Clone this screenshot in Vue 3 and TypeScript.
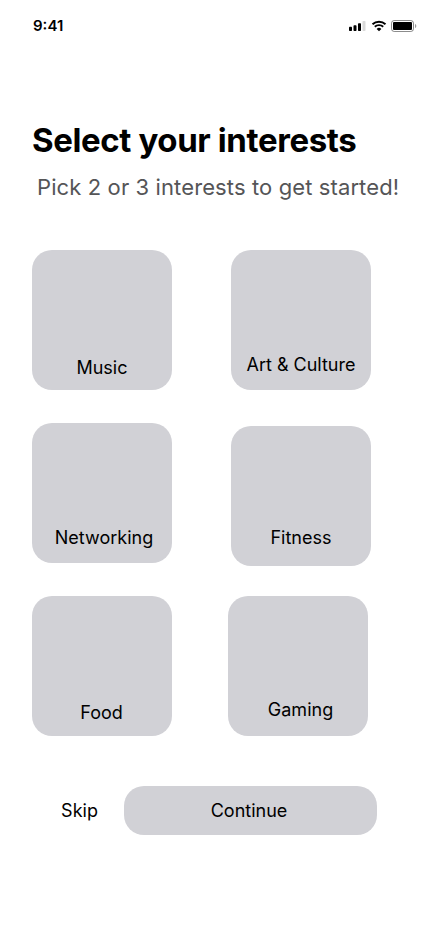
<script setup lang="ts">
interface Interest {
  id: string
  label: string
}

const interests: Interest[] = [
  { id: 'music', label: 'Music' },
  { id: 'art', label: 'Art & Culture' },
  { id: 'networking', label: 'Networking' },
  { id: 'fitness', label: 'Fitness' },
  { id: 'food', label: 'Food' },
  { id: 'gaming', label: 'Gaming' },
]
</script>

<template>
  <main class="screen">
    <header class="status">
      <span class="time">9:41</span>
      <svg class="signal" width="17" height="12" viewBox="0 0 17 12">
        <rect x="0" y="6.7" width="3" height="4.2" rx="0.7" />
        <rect x="4.5" y="5.2" width="3" height="5.7" rx="0.7" />
        <rect x="9" y="3.2" width="3" height="7.7" rx="0.7" />
        <rect x="13.5" y="1" width="3" height="9.9" rx="0.7" opacity="0.15" />
      </svg>
      <svg class="wifi" width="16" height="12" viewBox="0 0 16 12">
        <path d="M1.5 4.3a9.4 9.4 0 0 1 13 0M3.8 6.8a6 6 0 0 1 8.4 0" fill="none" stroke="#000" stroke-width="1.9" />
        <path d="M5.6 8.9a3.5 3.5 0 0 1 4.8 0L8 11.2z" />
      </svg>
      <svg class="battery" width="26" height="12" viewBox="0 0 26 12">
        <rect x="0.5" y="0.5" width="22" height="11" rx="2.7" fill="none" stroke="#000" stroke-opacity="0.45" />
        <rect x="2" y="2" width="19" height="8" rx="1.1" />
        <path d="M24 4v4c.8-.3 1.3-1.1 1.3-2s-.5-1.7-1.3-2z" opacity="0.4" />
      </svg>
    </header>
    <h1>Select your interests</h1>
    <p class="subtitle">Pick 2 or 3 interests to get started!</p>
    <section class="grid">
      <button v-for="item in interests" :key="item.id" type="button" class="card" :class="item.id">
        <span>{{ item.label }}</span>
      </button>
    </section>
    <footer class="actions">
      <button type="button" class="skip">Skip</button>
      <button type="button" class="continue">Continue</button>
    </footer>
  </main>
</template>

<style>
body {
  background: #fff;
}
</style>

<style scoped>
.screen {
  width: 430px;
  height: 932px;
  box-sizing: border-box;
  overflow: hidden;
  background: #fff;
  color: #000;
  font-family: Inter, sans-serif;
}
button {
  border: 0;
  margin: 0;
  padding: 0;
  font: 400 18px/22px Inter, sans-serif;
  color: #000;
  background: none;
}
.status {
  display: flex;
  align-items: center;
  height: 52px;
  padding: 0 13px 0 33px;
}
.time {
  font-size: 15px;
  line-height: 18px;
  font-weight: 600;
  margin-right: auto;
}
.wifi {
  margin: 0 4px 0 5px;
}
h1 {
  margin: 68px 0 0 32px;
  font-size: 33px;
  line-height: 40px;
  font-weight: 700;
  letter-spacing: -0.39px;
  white-space: nowrap;
}
.subtitle {
  margin: 14px 0 0 37px;
  font-size: 22px;
  line-height: 27px;
  font-weight: 400;
  letter-spacing: 0.11px;
  color: #555557;
  white-space: nowrap;
}
.grid {
  display: grid;
  grid-template-columns: 140px 140px;
  column-gap: 59px;
  row-gap: 33px;
  margin: 49px 0 0 32px;
}
.card {
  display: flex;
  align-items: flex-end;
  justify-content: center;
  height: 140px;
  padding-bottom: 11px;
  border-radius: 20px;
  background: #d1d1d6;
}
.art {
  padding-bottom: 14px;
}
.networking {
  padding: 0 0 14px 4px;
}
.fitness {
  margin-top: 3px;
  margin-bottom: -3px;
  padding-bottom: 17px;
}
.food {
  padding: 0 1px 12px 0;
}
.gaming {
  margin-left: -3px;
  margin-right: 3px;
  padding: 0 0 15px 5px;
}
.actions {
  display: flex;
  margin: 50px 0 0 61px;
}
.skip {
  width: 37px;
  margin-right: 26px;
}
.continue {
  width: 253px;
  height: 49px;
  padding-right: 3px;
  border-radius: 20px;
  background: #d1d1d6;
}
</style>
